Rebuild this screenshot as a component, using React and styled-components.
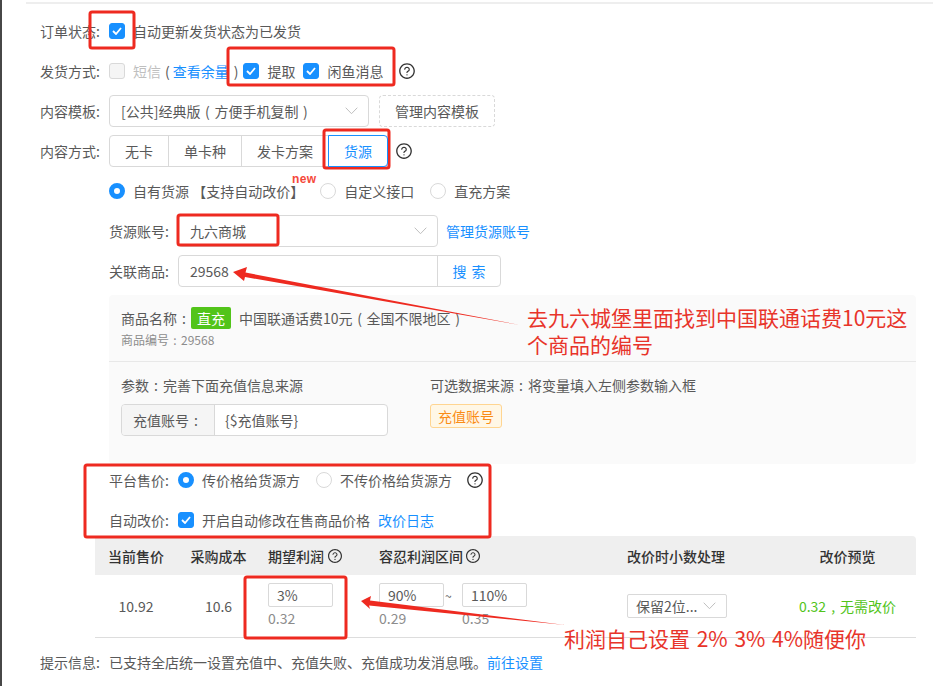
import React from 'react';
import styled, { createGlobalStyle } from 'styled-components';
import { AiOutlineQuestionCircle } from 'react-icons/ai';

const Global = createGlobalStyle`
  html, body { margin: 0; padding: 0; background: #fff; }
  * { box-sizing: border-box; }
  body {
    font-family: "Noto Sans CJK SC", "Liberation Sans", sans-serif;
    font-size: 14px;
    color: #595959;
  }
`;

const Page = styled.div`
  position: relative;
  width: 933px;
  height: 686px;
  overflow: hidden;
  border-left: 2px solid #474747;
  padding-top: 2px;
`;

const TopLine = styled.div`
  height: 2px;
  margin-left: 24px;
  background: #eee;
`;

const Form = styled.div`
  padding: 7px 0 0 38px;
`;

const Row = styled.div`
  display: flex;
  align-items: center;
  height: ${(p) => p.$h || 40}px;
  margin-top: ${(p) => p.$mt || 0}px;
  margin-left: ${(p) => p.$indent || 0}px;
`;

const Label = styled.div`
  flex: none;
  width: 69px;
  white-space: nowrap;
`;

// full width punctuation sits in the middle of its box in the reference
const Punct = styled.span`
  display: inline-block;
  width: 1em;
  text-align: center;
`;

const Box = styled.span`
  flex: none;
  display: inline-flex;
  align-items: center;
  justify-content: center;
  width: 16px;
  height: 16px;
  border-radius: 3px;
  background: ${(p) => (p.$off ? '#f5f5f5' : '#1890ff')};
  border: 1px solid ${(p) => (p.$off ? '#d9d9d9' : '#1890ff')};
`;

const Check = ({ off }) => (
  <Box $off={off}>
    {!off && (
      <svg width="10" height="8" viewBox="0 0 10 8" fill="none">
        <path d="M1 4l3 3 5-6" stroke="#fff" strokeWidth="1.8" />
      </svg>
    )}
  </Box>
);

const Radio = styled.span`
  flex: none;
  width: 16px;
  height: 16px;
  border-radius: 50%;
  background: #fff;
  border: ${(p) => (p.$on ? '5px solid #1890ff' : '1px solid #d9d9d9')};
`;

const Option = styled.span`
  display: inline-flex;
  align-items: center;
  gap: 8px;
  margin-right: ${(p) => p.$mr ?? 16}px;
  white-space: nowrap;
`;

const Muted = styled.span`
  color: #bfbfbf;
`;

const Link = styled.a`
  color: #1890ff;
  white-space: nowrap;
  margin-left: ${(p) => p.$ml || 0}px;
`;

const Paren = styled.span`
  margin: ${(p) => (p.$open ? '0 3px 0 4px' : '0 5px')};
`;

const Help = styled(AiOutlineQuestionCircle)`
  flex: none;
  color: #333;
  margin-left: ${(p) => p.$ml || 0}px;
`;

const SelectBox = styled.div`
  display: flex;
  align-items: center;
  justify-content: space-between;
  width: 260px;
  height: 32px;
  padding: 0 10px 0 11px;
  background: #fff;
  border: 1px solid #d9d9d9;
  border-radius: 4px;
  white-space: nowrap;
`;

const CompactSelect = styled(SelectBox)`
  width: 100px;
  height: 24px;
  padding: 0 10px 0 8px;
  border-radius: 2px;
`;

const Chevron = () => (
  <svg width="13" height="8" viewBox="0 0 13 8" fill="none">
    <path d="M.7.7l5.8 6 5.8-6" stroke="#bfbfbf" strokeWidth="1" />
  </svg>
);

const DashedButton = styled.div`
  display: flex;
  align-items: center;
  justify-content: center;
  width: 116px;
  height: 32px;
  margin-left: 10px;
  border: 1px dashed #d9d9d9;
  border-radius: 4px;
`;

const Tabs = styled.div`
  display: flex;
  height: 32px;
  margin-right: 7px;
`;

const Tab = styled.div`
  display: flex;
  align-items: center;
  padding: 0 15px;
  white-space: nowrap;
  border: 1px solid ${(p) => (p.$on ? '#1890ff' : '#d9d9d9')};
  margin-left: -1px;
  color: ${(p) => (p.$on ? '#1890ff' : '#595959')};
  z-index: ${(p) => (p.$on ? 1 : 0)};
  &:first-child { margin-left: 0; border-radius: 4px 0 0 4px; }
  &:last-child { border-radius: 0 4px 4px 0; }
`;

const NewMark = styled.span`
  position: absolute;
  left: 159px;
  top: -9px;
  color: #f5483b;
  font: bold 12px "Liberation Sans", sans-serif;
  letter-spacing: 0.4px;
`;

const RadioText = styled.span`
  position: relative;
`;

const SearchGroup = styled.div`
  display: flex;
  width: 323px;
  height: 32px;
  border: 1px solid #d9d9d9;
  border-radius: 4px;
`;

const SearchValue = styled.div`
  display: flex;
  align-items: center;
  width: 259px;
  padding-left: 11px;
  border-right: 1px solid #d9d9d9;
`;

const SearchBtn = styled.div`
  flex: 1;
  display: flex;
  align-items: center;
  justify-content: center;
  color: #1890ff;
  word-spacing: 2px;
`;

const Panel = styled.div`
  width: 807px;
  height: 169px;
  margin: 4px 0 0 69px;
  background: #fafafa;
  border-radius: 4px;
`;

const GoodsInfo = styled.div`
  height: 67px;
  padding: 12px 0 0 12px;
  border-bottom: 1px solid #e8e8e8;
`;

const GoodsName = styled.div`
  display: flex;
  align-items: center;
  height: 22px;
`;

const DirectTag = styled.span`
  display: inline-flex;
  align-items: center;
  justify-content: center;
  width: 40px;
  height: 22px;
  margin-right: 8px;
  color: #fff;
  background: #52c41a;
  border-radius: 2px;
`;

const GoodsNo = styled.div`
  margin-top: 3px;
  font-size: 12px;
  line-height: 16px;
  color: #8c8c8c;
`;

const Params = styled.div`
  display: grid;
  grid-template-columns: 309px 1fr;
  padding: 13px 0 0 12px;
`;

const ParamTitle = styled.div`
  height: 20px;
  line-height: 20px;
  margin-bottom: 9px;
`;

const InputGroup = styled.div`
  display: flex;
  width: 267px;
  height: 32px;
  background: #fff;
  border: 1px solid #d9d9d9;
  border-radius: 4px;
  overflow: hidden;
`;

const Addon = styled.div`
  display: flex;
  align-items: center;
  justify-content: center;
  width: 93px;
  background: #f5f5f5;
  border-right: 1px solid #d9d9d9;
`;

const AddonValue = styled.div`
  display: flex;
  align-items: center;
  padding-left: 10px;
`;

const SourceTag = styled.span`
  display: inline-flex;
  align-items: center;
  justify-content: center;
  width: 72px;
  height: 24px;
  color: #fa8c16;
  background: #fff7e6;
  border: 1px solid #ffd591;
  border-radius: 3px;
`;

const Table = styled.div`
  width: 821px;
  margin-left: 55px;
`;

const TableRow = styled.div`
  display: grid;
  grid-template-columns: 82px 83px 111px 248px 160px 137px;
  align-items: center;
  height: ${(p) => p.$h}px;
  background: ${(p) => (p.$head ? '#efefef' : 'transparent')};
  border-radius: ${(p) => (p.$head ? '0 4px 0 0' : '0')};
  border-bottom: ${(p) => (p.$head ? 'none' : '1px solid #ddd')};
  font-weight: ${(p) => (p.$head ? 500 : 400)};
  color: ${(p) => (p.$head ? '#333' : '#595959')};
`;

const Cell = styled.div`
  display: flex;
  align-items: center;
  justify-content: ${(p) => (p.$center ? 'center' : 'flex-start')};
  padding-left: ${(p) => (p.$center ? 0 : 8)}px;
  white-space: nowrap;
  color: ${(p) => p.$c || 'inherit'};
`;

const Stack = styled.div`
  display: flex;
  flex-direction: column;
  width: 65px;
`;

const SmallInput = styled.div`
  display: flex;
  align-items: center;
  height: 24px;
  padding-left: 8px;
  background: #fff;
  border: 1px solid #d9d9d9;
  border-radius: 2px;
`;

const Hint = styled.div`
  height: 22px;
  line-height: 22px;
  color: #8c8c8c;
`;

const Tilde = styled.span`
  width: 18px;
  padding: 0 0 22px 1px;
  text-align: left;
  font-size: 12px;
`;

const Annotations = styled.svg`
  position: absolute;
  left: -2px;
  top: 0;
  pointer-events: none;
`;

const Note = styled.div`
  position: absolute;
  left: ${(p) => p.$x - 2}px;
  top: ${(p) => p.$y}px;
  width: ${(p) => p.$w}px;
  font-size: 21px;
  line-height: 27px;
  word-spacing: 2px;
  color: #e8342a;
`;

const boxes = [
  [90, 12, 44, 36],
  [228, 48, 166, 37],
  [324, 130, 65, 38],
  [178, 215, 100, 30],
  [85, 465, 405, 72],
  [245, 577, 101, 61],
];

export default function App() {
  return (
    <Page>
      <Global />
      <TopLine />
      <Form>
        <Row>
          <Label>订单状态:</Label>
          <Option $mr={0}><Check />自动更新发货状态为已发货</Option>
        </Row>
        <Row>
          <Label>发货方式:</Label>
          <Option $mr={0}>
            <Check off />
            <span><Muted>短信</Muted><Paren $open>(</Paren><Link>查看余量</Link><Paren>)</Paren></span>
          </Option>
          <Option $mr={8}><Check />提取</Option>
          <Option $mr={0}><Check />闲鱼消息</Option>
          <Help size={18} $ml={15} />
        </Row>
        <Row>
          <Label>内容模板:</Label>
          <SelectBox>
            <span>[公共]经典版<Punct>(</Punct>方便手机复制<Punct>)</Punct></span>
            <Chevron />
          </SelectBox>
          <DashedButton>管理内容模板</DashedButton>
        </Row>
        <Row>
          <Label>内容方式:</Label>
          <Tabs>
            <Tab>无卡</Tab>
            <Tab>单卡种</Tab>
            <Tab>发卡方案</Tab>
            <Tab $on>货源</Tab>
          </Tabs>
          <Help size={18} />
        </Row>
        <Row $indent={69}>
          <Option>
            <Radio $on />
            <RadioText>自有货源 【支持自动改价】<NewMark>new</NewMark></RadioText>
          </Option>
          <Option><Radio />自定义接口</Option>
          <Option><Radio />直充方案</Option>
        </Row>
        <Row $indent={69}>
          <Label>货源账号:</Label>
          <SelectBox>九六商城<Chevron /></SelectBox>
          <Link $ml={8}>管理货源账号</Link>
        </Row>
        <Row $indent={69}>
          <Label>关联商品:</Label>
          <SearchGroup>
            <SearchValue>29568</SearchValue>
            <SearchBtn>搜 索</SearchBtn>
          </SearchGroup>
        </Row>
        <Panel>
          <GoodsInfo>
            <GoodsName>
              <span>商品名称<Punct>:</Punct></span>
              <DirectTag>直充</DirectTag>
              <span>中国联通话费10元<Punct>(</Punct>全国不限地区<Punct>)</Punct></span>
            </GoodsName>
            <GoodsNo>商品编号<Punct>:</Punct>29568</GoodsNo>
          </GoodsInfo>
          <Params>
            <div>
              <ParamTitle>参数<Punct>:</Punct>完善下面充值信息来源</ParamTitle>
              <InputGroup>
                <Addon>充值账号<Punct>:</Punct></Addon>
                <AddonValue>{'{$充值账号}'}</AddonValue>
              </InputGroup>
            </div>
            <div>
              <ParamTitle>可选数据来源<Punct>:</Punct>将变量填入左侧参数输入框</ParamTitle>
              <SourceTag>充值账号</SourceTag>
            </div>
          </Params>
        </Panel>
        <Row $indent={69} $h={32}>
          <Label>平台售价:</Label>
          <Option><Radio $on />传价格给货源方</Option>
          <Option $mr={0}><Radio />不传价格给货源方</Option>
          <Help size={18} $ml={14} />
        </Row>
        <Row $indent={69} $h={32} $mt={8}>
          <Label>自动改价:</Label>
          <Option $mr={0}><Check />开启自动修改在售商品价格</Option>
          <Link $ml={8}>改价日志</Link>
        </Row>
        <Table>
          <TableRow $head $h={39}>
            <Cell $center>当前售价</Cell>
            <Cell $center>采购成本</Cell>
            <Cell>期望利润<Help size={16} $ml={3} /></Cell>
            <Cell>容忍利润区间<Help size={16} $ml={2} /></Cell>
            <Cell>改价时小数处理</Cell>
            <Cell $center>改价预览</Cell>
          </TableRow>
          <TableRow $h={63}>
            <Cell $center>10.92</Cell>
            <Cell $center>10.6</Cell>
            <Cell>
              <Stack>
                <SmallInput>3%</SmallInput>
                <Hint>0.32</Hint>
              </Stack>
            </Cell>
            <Cell>
              <Stack>
                <SmallInput>90%</SmallInput>
                <Hint>0.29</Hint>
              </Stack>
              <Tilde>~</Tilde>
              <Stack>
                <SmallInput>110%</SmallInput>
                <Hint>0.35</Hint>
              </Stack>
            </Cell>
            <Cell>
              <CompactSelect>保留2位...<Chevron /></CompactSelect>
            </Cell>
            <Cell $center $c="#52c41a">0.32<Punct>,</Punct>无需改价</Cell>
          </TableRow>
        </Table>
        <Row $h={48}>
          <Label>提示信息:</Label>
          已支持全店统一设置充值中、充值失败、充值成功发消息哦。
          <Link>前往设置</Link>
        </Row>
      </Form>

      <Annotations width="933" height="686" viewBox="0 0 933 686">
        {boxes.map(([x, y, w, h]) => (
          <rect key={x} x={x} y={y} width={w} height={h} rx="2" fill="none" stroke="#ee2a20" strokeWidth="3" />
        ))}
        <polygon points="233,272 247,267 245.5,272.5 520,325 245,277 244,281" fill="#ee2a20" />
        <polygon points="361,601 371,596 370,600.5 565,625 369,605.5 370,609" fill="#ee2a20" />
      </Annotations>
      <Note $x={527} $y={304} $w={384}>去九六城堡里面找到中国联通话费10元这个商品的编号</Note>
      <Note $x={564} $y={625} $w={340}>利润自己设置 2% 3% 4%随便你</Note>
    </Page>
  );
}
